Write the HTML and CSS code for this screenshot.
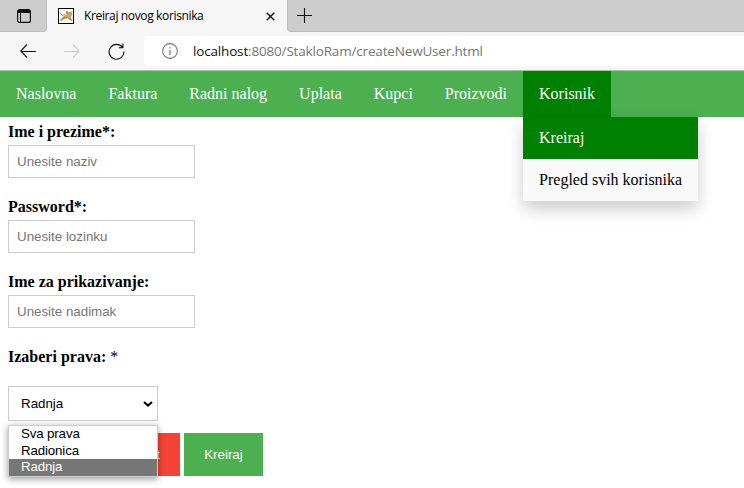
FILE: index.html
```html
<!DOCTYPE html>
<html lang="sr">
<head>
<meta charset="utf-8">
<title>Kreiraj novog korisnika</title>
<link rel="stylesheet" href="styles.css">
</head>
<body>
<header class="browser">
  <div class="tabbar">
    <div class="tab-actions">
      <svg width="14" height="14" viewBox="0 0 14 14"><rect x=".6" y=".6" width="12.8" height="12.8" rx="2" fill="none" stroke="#111" stroke-width="1.2"/><path d="M1 1h12v3H1z" fill="#111"/><path d="M3.500 4v9" stroke="#111" stroke-width="1"/></svg>
    </div>
    <div class="tab">
      <svg class="favicon" width="16" height="16" viewBox="0 0 16 16"><rect x=".5" y=".5" width="15" height="15" fill="#fff" stroke="#000"/><path d="M8 3l1.500 1h3L14 3v4l-1 2 1 4-2-1-2-2-3 .5L4 13H2l2.500-3L6 7.500 8.500 7z" fill="#d2a65a"/><path d="M2 4.500l2.500 3L7 6M2 12.500l3-3 4 .5M10 10l4 2.500M9 3v3" stroke="#77705c" stroke-width=".9" fill="none"/></svg>
      <span class="tab-title">Kreiraj novog korisnika</span>
      <svg class="tab-close" width="9" height="9" viewBox="0 0 9 9"><path d="M.7.7l7.600 7.600M8.300.7L.7 8.300" stroke="#111" stroke-width="1.400"/></svg>
    </div>
    <div class="tab-rest">
      <svg width="15" height="15" viewBox="0 0 15 15"><path d="M7.500 0v15M0 7.500h15" stroke="#111" stroke-width="1.100"/></svg>
    </div>
  </div>
  <div class="toolbar">
    <svg width="16" height="14" viewBox="0 0 16 14"><path d="M7 .5L.7 7 7 13.500M.7 7.500H16" fill="none" stroke="#111" stroke-width="1.100"/></svg>
    <svg class="forward" width="16" height="14" viewBox="0 0 16 14"><path d="M9 .5L15.300 7 9 13.500M15.300 7.500H0" fill="none" stroke="#ccc" stroke-width="1.100"/></svg>
    <svg class="reload" width="17" height="17" viewBox="0 0 17 17"><path d="M14.500 4.500A7.400 7.400 0 1 0 15.900 8.500M14.900 .5v4.200h-4.200" fill="none" stroke="#111" stroke-width="1.150"/></svg>
    <div class="address">
      <svg width="16" height="16" viewBox="0 0 16 16"><circle cx="8" cy="8" r="7.400" fill="none" stroke="#777" stroke-width="1.100"/><path d="M8 7v5M8 4v1.500" stroke="#777" stroke-width="1.200"/></svg>
      <span class="url"><span class="host">localhost</span>:8080/StakloRam/createNewUser.html</span>
    </div>
  </div>
</header>
<nav class="nav">
  <a>Naslovna</a><a>Faktura</a><a>Radni nalog</a><a>Uplata</a><a>Kupci</a><a>Proizvodi</a>
  <div class="dropdown">
    <a class="current">Korisnik</a>
    <div class="menu"><a class="current">Kreiraj</a><a>Pregled svih korisnika</a></div>
  </div>
</nav>
<form class="form">
  <div class="field"><label for="name">Ime i prezime*:</label><input id="name" placeholder="Unesite naziv"></div>
  <div class="field"><label for="pass">Password*:</label><input id="pass" type="password" placeholder="Unesite lozinku"></div>
  <div class="field"><label for="nick">Ime za prikazivanje:</label><input id="nick" placeholder="Unesite nadimak"></div>
  <div class="rights-label"><b>Izaberi prava:</b> *</div>
  <div class="select">
    <span>Radnja</span>
    <svg width="10" height="6" viewBox="0 0 10 6"><path d="M1 1l4 3.600L9 1" fill="none" stroke="#000" stroke-width="2"/></svg>
    <ul class="options"><li>Sva prava</li><li>Radionica</li><li class="selected">Radnja</li></ul>
  </div>
  <div class="buttons">
    <button type="reset" class="reset">Reset</button>
    <button type="button" class="submit">Kreiraj</button>
  </div>
</form>
</body>
</html>
```
FILE: styles.css
```css
* { box-sizing: border-box; }
body { margin: 0; width: 744px; height: 488px; overflow: hidden; background: #fff; color: #000; font: 16px/18px "Liberation Serif", serif; }
svg { display: block; flex: none; }

.browser { height: 71px; background: #f6f6f6; border-bottom: 1px solid #b9b9b9; }
.tabbar { display: flex; height: 32px; }
.tab-actions { width: 47px; padding: 9px 0 0 17px; background: #cdcdcd; border-radius: 0 0 4px 0; border-bottom: 1px solid #bdbdbd; border-right: 1px solid #bdbdbd; }
.tab { display: flex; align-items: center; width: 240px; padding: 0 12px 0 11px; }
.tab-title { flex: 1; margin-left: 10px; font: 12px/16px "Open Sans", sans-serif; letter-spacing: -.36px; white-space: nowrap; }
.tab-rest { flex: 1; padding: 8px 0 0 9px; background: #cdcdcd; border-bottom: 1px solid #bdbdbd; border-left: 1px solid #bdbdbd; border-radius: 0 0 0 4px; }
.toolbar { display: flex; align-items: center; height: 38px; padding-left: 20px; }
.forward { margin-left: 28px; }
.reload { margin-left: 28px; }
.address { display: flex; align-items: center; flex: 1; height: 30px; margin-left: 19px; padding-left: 18px; background: #fff; border-radius: 4px 0 0 4px; }
.url { margin-left: 15px; color: #757575; font: 13.5px/20px "Open Sans", sans-serif; letter-spacing: -.17px; white-space: nowrap; }
.host { color: #111; }

.nav { display: flex; height: 46px; background: #4caf50; }
.nav a { display: block; padding: 14px 16px; color: #fff; white-space: nowrap; }
.dropdown { position: relative; }
.nav .current { background: #008000; color: #fff; }
.menu { position: absolute; top: 46px; left: 0; width: 175px; background: #f9f9f9; box-shadow: 0 8px 16px rgba(0, 0, 0, .2); }
.nav .menu a { padding: 12px 16px; }
.menu a:not(.current) { color: #000; }

.form { padding: 6px 8px 0; }
.field { height: 75px; }
.field label { display: block; height: 22px; font-weight: bold; }
.field input { display: block; width: 187px; height: 33px; padding: 8px; border: 1px solid #ccc; font: 13.333px "Liberation Sans", sans-serif; }
.field input::placeholder { color: #757575; }
.rights-label { height: 38px; }
.select { position: relative; display: flex; align-items: center; justify-content: space-between; width: 150px; height: 35px; padding: 0 4px 0 12px; border: 1px solid #ccc; font: 13.333px "Liberation Sans", sans-serif; }
.options { position: absolute; top: 38px; left: -1px; width: 150px; height: 52px; margin: 0; padding: 0; list-style: none; background: #fff; border: 1px solid #ccc; box-shadow: 0 2px 7px rgba(0, 0, 0, .4); letter-spacing: -.15px; }
.options li { height: 16.660px; padding-left: 12px; line-height: 16.660px; }
.options .selected { background: #767676; color: #fff; }
.buttons { display: flex; gap: 4px; margin: 12px 0 0 97px; }
.buttons button { height: 43px; padding: 0; border: 0; color: #fff; font: 13.333px "Liberation Sans", sans-serif; }
.reset { width: 75px; background: #f44336; }
.buttons .submit { width: 79px; background: #4caf50; }
```
